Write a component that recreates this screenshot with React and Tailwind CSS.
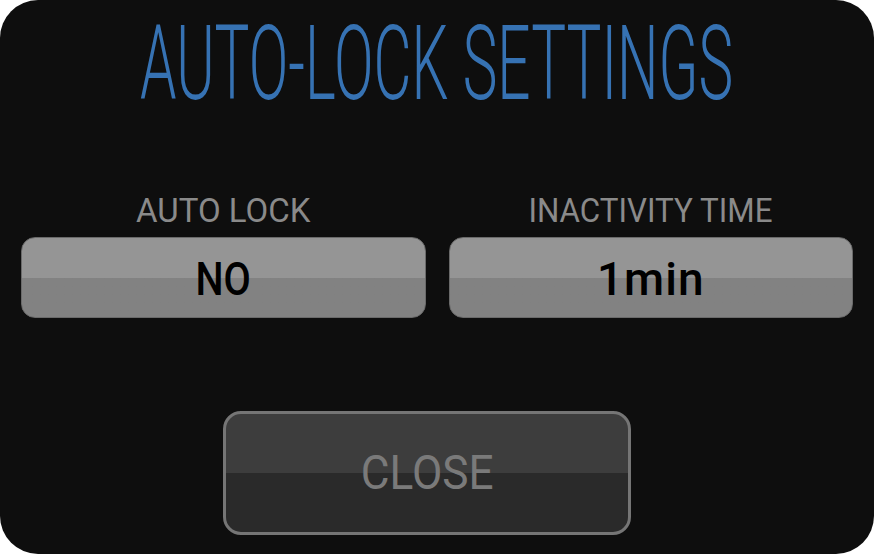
export default function App() {
  const font = { fontFamily: "Roboto, 'Liberation Sans', sans-serif" };

  return (
    <div className="w-[874px] h-[554px] bg-white">
      <div
        className="w-full h-full bg-[#0e0e0e] rounded-[38px] flex flex-col items-center"
        style={font}
      >
        <div className="mt-[12px] h-[103px] flex justify-center w-full overflow-visible">
          <h1 className="text-[104px] leading-none font-light text-[#3672b3] whitespace-nowrap scale-x-[0.562] origin-center">
            AUTO-LOCK SETTINGS
          </h1>
        </div>

        <div className="mt-[79px] w-full px-[21px] grid grid-cols-2 gap-[23px]">
          <div className="flex flex-col items-center">
            <span className="text-[33px] leading-none text-[#8a8a8a] h-[33px]">AUTO LOCK</span>
            <button className="mt-[10px] w-full h-[81px] rounded-[14px] border border-[#6a6a6a] overflow-hidden bg-gradient-to-b from-[#959595] from-[51%] to-[#828282] to-[51%] flex items-center justify-center">
              <span className="text-[46px] leading-none font-medium text-black scale-x-[0.86] pt-[2px]">NO</span>
            </button>
          </div>
          <div className="flex flex-col items-center">
            <span className="text-[33px] leading-none text-[#8a8a8a] h-[33px] scale-x-[0.95]">INACTIVITY TIME</span>
            <button className="mt-[10px] w-full h-[81px] rounded-[14px] border border-[#6a6a6a] overflow-hidden bg-gradient-to-b from-[#959595] from-[51%] to-[#828282] to-[51%] flex items-center justify-center">
              <span className="text-[46px] leading-none font-medium text-black pt-[2px] tracking-[1px]">1min</span>
            </button>
          </div>
        </div>

        <button className="mt-[93px] mr-[20px] w-[408px] h-[124px] rounded-[18px] border-[3px] border-[#757575] bg-gradient-to-b from-[#3d3d3d] from-[50%] to-[#2a2a2a] to-[50%] flex items-center justify-center">
          <span className="text-[48px] leading-none text-[#7a7a7a] scale-x-[0.92]">CLOSE</span>
        </button>
      </div>
    </div>
  );
}
